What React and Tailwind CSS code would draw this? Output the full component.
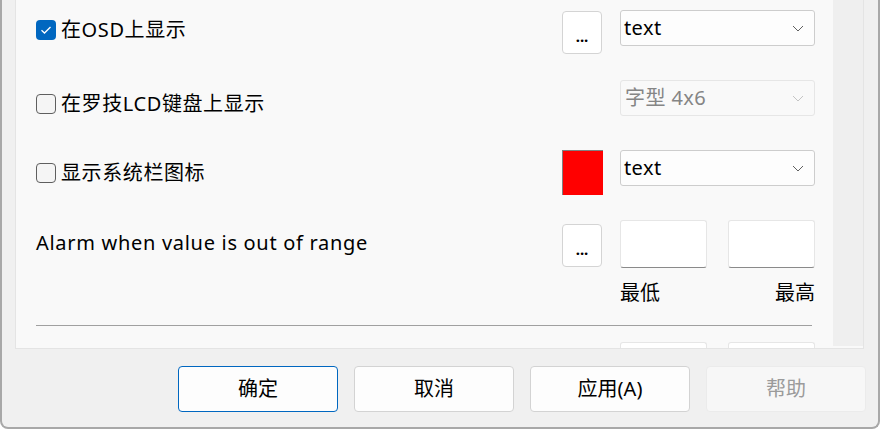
import React from 'react';

const font = { fontFamily: '"Noto Sans", "Noto Sans CJK SC", sans-serif' };

const Check = ({ checked }) =>
    checked ? (
        <div className="w-[20px] h-[20px] rounded-[4px] bg-[#0067c0] flex items-center justify-center">
            <svg width="12" height="10" viewBox="0 0 12 10">
                <path d="M1.5 5.2 L4.5 8 L10.5 2" fill="none" stroke="white" strokeWidth="1.3" />
            </svg>
        </div>
    ) : (
        <div className="w-[20px] h-[20px] rounded-[4px] bg-[#f5f5f5] border border-[#5f5f5f]" />
    );

const Chevron = ({ color = '#606060' }) => (
    <svg width="12" height="7" viewBox="0 0 12 7">
        <path d="M1 1 L6 6 L11 1" fill="none" stroke={color} strokeWidth="1" />
    </svg>
);

const Dropdown = ({ value, disabled }) => (
    <div
        className={
            disabled
                ? "w-[195px] h-[36px] mt-[10px] flex items-center justify-between pl-[4px] pr-[10px] rounded-[3px] border border-[#e6e6e6] bg-[#f9f9f9] text-[#858585]"
                : "w-[195px] h-[36px] mt-[10px] flex items-center justify-between pl-[3px] pr-[10px] rounded-[3px] border border-[#cdcdcd] bg-[#fdfdfd] text-black"
        }
    >
        <span className="text-[20px] leading-none tracking-[0.4px]">{value}</span>
        <Chevron color={disabled ? '#c4c4c4' : '#606060'} />
    </div>
);

const DotsButton = ({ top }) => (
    <div
        className="w-[40px] h-[43px] rounded-[4px] border border-[#d4d4d4] bg-white flex items-center justify-center text-[15px] font-bold leading-none pt-[8px]"
        style={{ marginTop: top }}
    >
        ...
    </div>
);

const Field = () => (
    <div className="w-[87px] h-[48px] bg-white border border-[#e6e6e6] border-b-[#8a8a8a] rounded-[3px]" />
);

const CheckRow = ({ checked, label, top, children }) => (
    <div className="h-[70px] flex items-start pr-[18px]">
        <div className="flex-1 flex items-center gap-[5px] pl-[20px]" style={{ marginTop: top }}>
            <Check checked={checked} />
            <span className="text-[20px] leading-none tracking-[0.6px]">{label}</span>
        </div>
        {children}
    </div>
);

const Btn = ({ children, primary, disabled }) => (
    <div
        className={
            primary
                ? "w-[160px] h-[46px] rounded-[4px] border border-[#0067c0] bg-[#fdfdfd] flex items-center justify-center text-[20px]"
                : disabled
                ? "w-[160px] h-[46px] rounded-[4px] border border-[#ebebeb] bg-[#f7f7f7] flex items-center justify-center text-[20px] text-[#9b9b9b]"
                : "w-[160px] h-[46px] rounded-[4px] border border-[#d3d3d3] bg-[#fdfdfd] flex items-center justify-center text-[20px]"
        }
    >
        {children}
    </div>
);

export default function App() {
    return (
        <div
            className="w-[880px] h-[429px] bg-[#f0f0f0] border-l-2 border-r-2 border-b-2 border-[#a8a8a8] rounded-b-[8px] overflow-hidden text-black"
            style={font}
        >
            {/* settings panel */}
            <div className="ml-[13px] w-[849px] h-[349px] bg-[#f9f9f9] border-l border-r border-b border-[#e4e4e4] flex">
                <div className="flex-1 h-full overflow-hidden">
                    <CheckRow checked top={20} label="在OSD上显示">
                        <DotsButton top={11} />
                        <div className="ml-[18px]">
                            <Dropdown value="text" />
                        </div>
                    </CheckRow>

                    <CheckRow top={24} label="在罗技LCD键盘上显示">
                        <div className="ml-[58px]">
                            <Dropdown value="字型 4x6" disabled />
                        </div>
                    </CheckRow>

                    <CheckRow top={23} label="显示系统栏图标">
                        <div className="w-[41px] h-[45px] mt-[10px] bg-[#ff0000] border-t border-l border-[#808080]" />
                        <div className="ml-[17px]">
                            <Dropdown value="text" />
                        </div>
                    </CheckRow>

                    {/* alarm range */}
                    <div className="flex items-start pr-[18px]">
                        <div className="flex-1 pl-[20px] mt-[23px] text-[20px] leading-none tracking-[0.7px]">
                            Alarm when value is out of range
                        </div>
                        <DotsButton top={14} />
                        <div className="ml-[18px] mt-[10px] w-[195px]">
                            <div className="flex justify-between">
                                <Field />
                                <Field />
                            </div>
                            <div className="flex justify-between mt-[15px] text-[20px] leading-none">
                                <span>最低</span>
                                <span>最高</span>
                            </div>
                        </div>
                    </div>

                    <div className="ml-[20px] mr-[21px] mt-[22px] h-px bg-[#a0a0a0]" />

                    <div className="flex justify-end pr-[18px] mt-[16px]">
                        <div className="w-[195px] flex justify-between">
                            <Field />
                            <Field />
                        </div>
                    </div>
                </div>
                {/* scrollbar track */}
                <div className="w-[30px] h-[346px] bg-[#efefef]" />
            </div>

            {/* dialog buttons */}
            <div className="flex justify-end gap-[16px] pr-[12px] mt-[17px]">
                <Btn primary>确定</Btn>
                <Btn>取消</Btn>
                <Btn>应用(A)</Btn>
                <Btn disabled>帮助</Btn>
            </div>
        </div>
    );
}
